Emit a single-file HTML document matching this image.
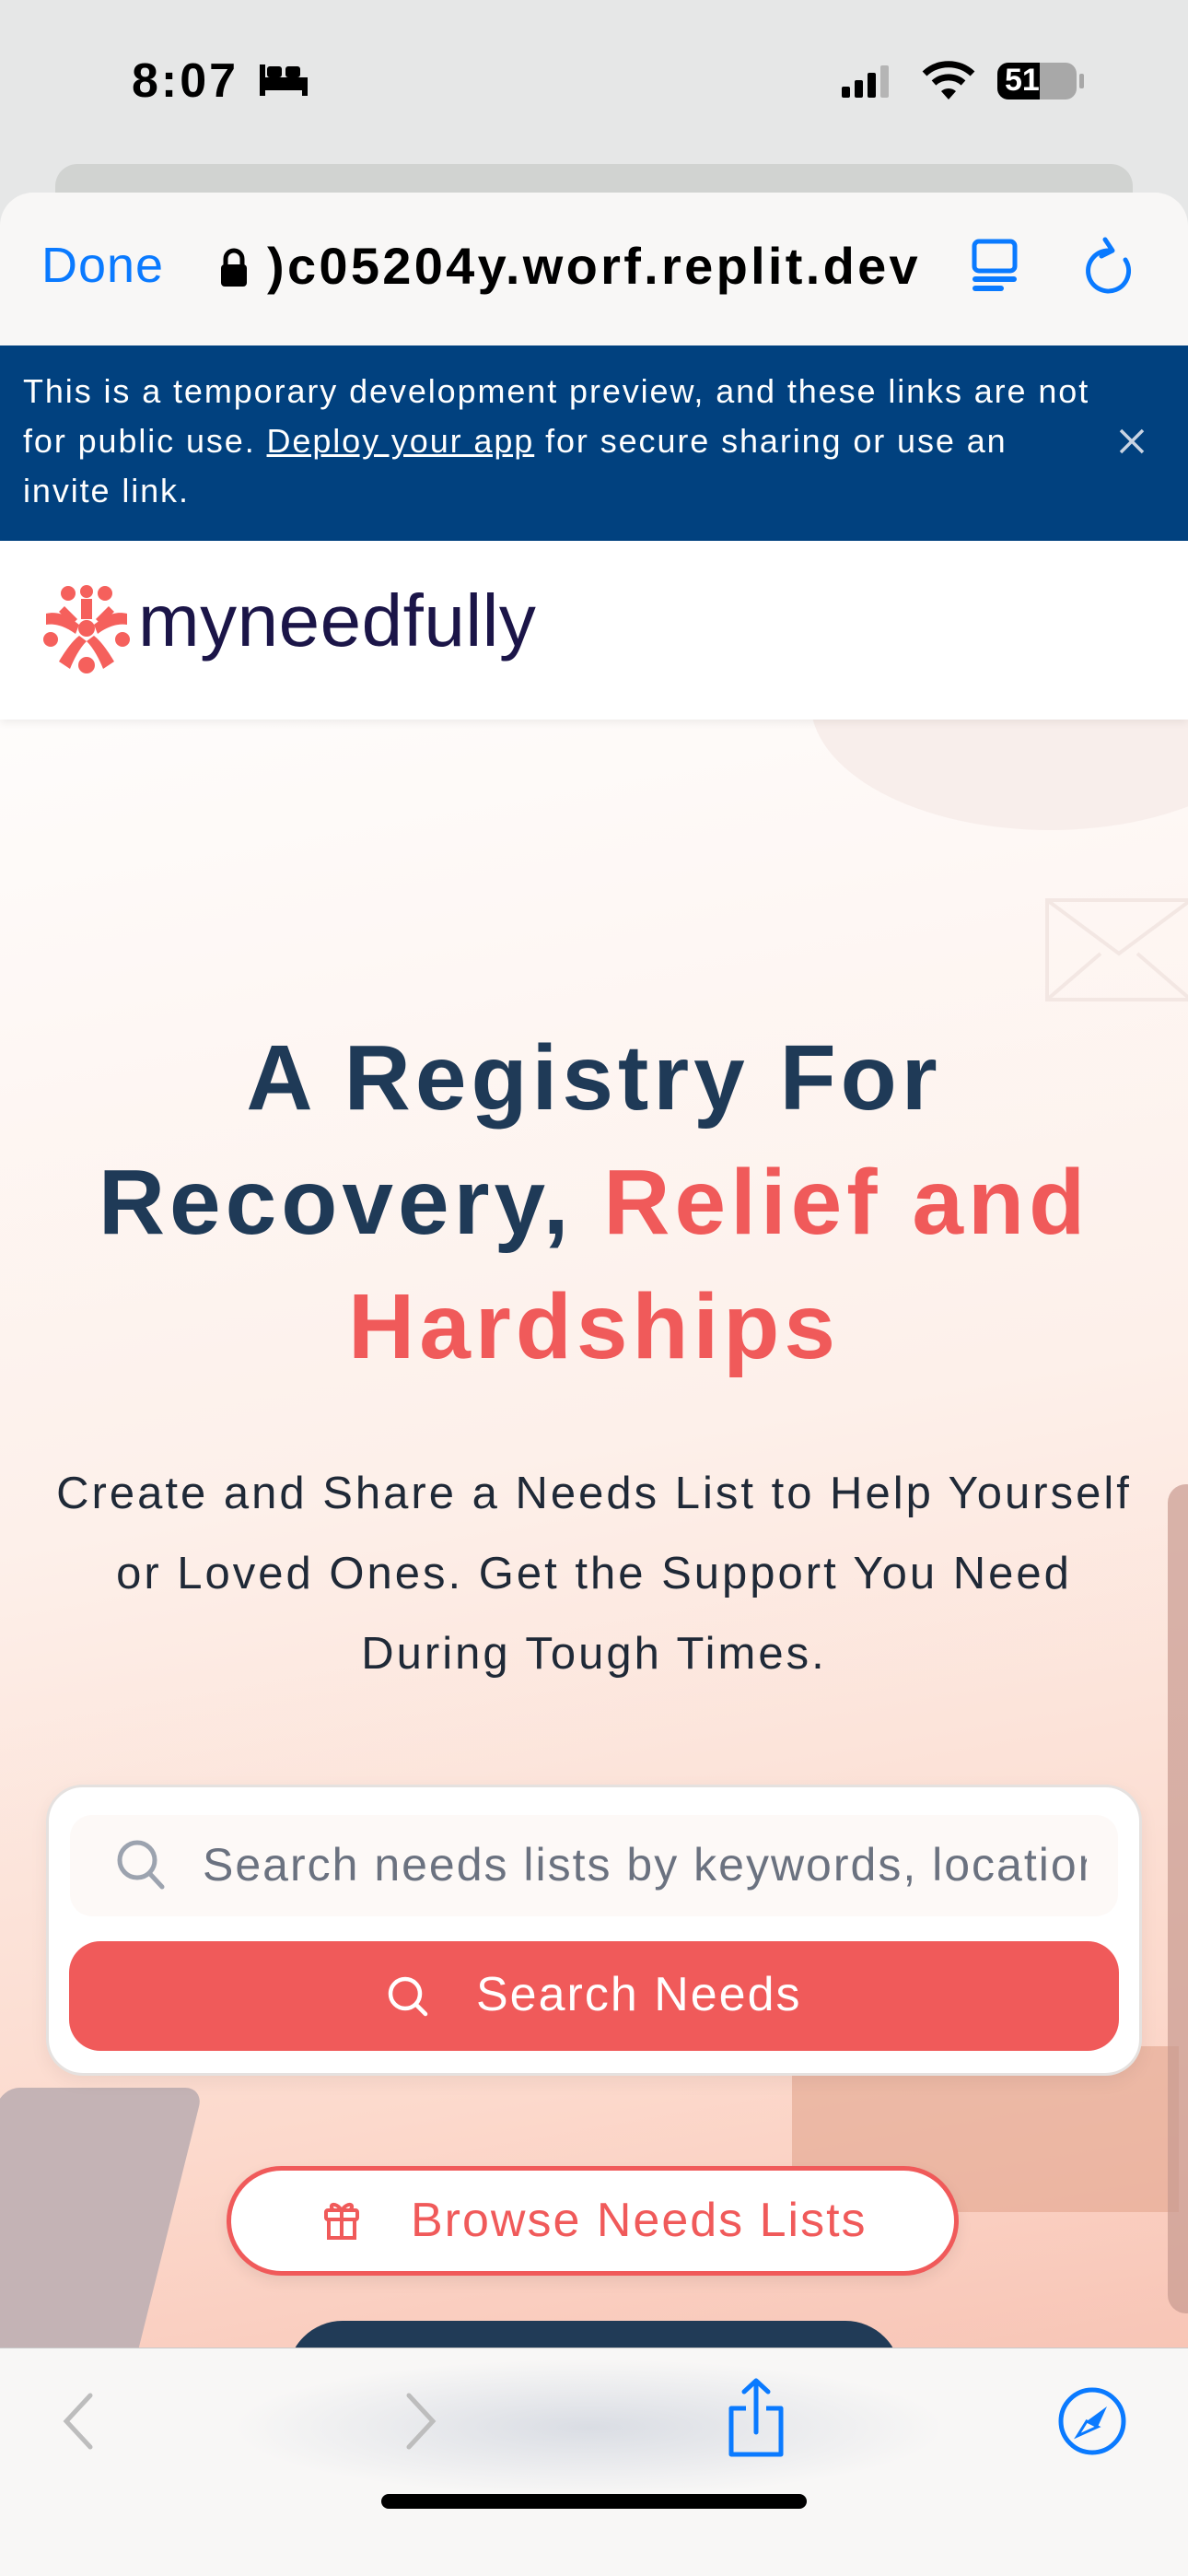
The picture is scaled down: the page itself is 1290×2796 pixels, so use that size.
<!DOCTYPE html>
<html><head><meta charset="utf-8"><style>
*{margin:0;padding:0;box-sizing:border-box}
body{width:1290px;height:2796px;overflow:hidden;position:relative;font-family:"Liberation Sans",sans-serif;background:#e6e7e7}
.abs{position:absolute}
</style></head><body>
<!-- status bar -->
<div class="abs" style="left:143px;top:58px;font-size:52px;font-weight:bold;color:#000;letter-spacing:3px">8:07</div>
<svg class="abs" style="left:280px;top:66px" width="56" height="40"><rect x="2" y="18" width="52" height="14" fill="#000" rx="2"/><rect x="2" y="4" width="6" height="34" fill="#000"/><rect x="48" y="18" width="6" height="20" fill="#000"/><rect x="10" y="6" width="16" height="12" rx="3" fill="#000"/><rect x="30" y="6" width="16" height="12" rx="3" fill="#000"/></svg>
<svg class="abs" style="left:914px;top:70px" width="64" height="36"><rect x="0" y="24" width="9" height="12" rx="2"/><rect x="14" y="17" width="9" height="19" rx="2"/><rect x="28" y="9" width="9" height="27" rx="2"/><rect x="42" y="1" width="9" height="35" rx="2" fill="#b5b5b5"/></svg>
<svg class="abs" style="left:1000px;top:66px" width="60" height="42"><path d="M4 14 A38 38 0 0 1 56 14" stroke="#000" stroke-width="7" fill="none"/><path d="M14 24 A24 24 0 0 1 46 24" stroke="#000" stroke-width="7" fill="none"/><path d="M22 33 L30 42 L38 33 A12 12 0 0 0 22 33Z" fill="#000"/></svg>
<div class="abs" style="left:1083px;top:68px;width:86px;height:40px;border-radius:12px;background:#a8a8a8;overflow:hidden"><div style="width:46px;height:40px;background:#000"></div><div class="abs" style="left:8px;top:0;font-size:34px;font-weight:bold;color:#fff">51</div></div>
<div class="abs" style="left:1172px;top:80px;width:5px;height:16px;background:#a8a8a8;border-radius:2px"></div>
<!-- back tab -->
<div class="abs" style="left:60px;top:178px;width:1170px;height:60px;background:#d1d3d1;border-radius:24px"></div>
<!-- sheet -->
<div class="abs" style="left:0;top:209px;width:1290px;height:170px;background:#f8f7f6;border-radius:36px 36px 0 0"></div>
<div class="abs" style="left:45px;top:257px;font-size:54px;color:#0a7aff;letter-spacing:1px">Done</div>
<svg class="abs" style="left:238px;top:268px" width="32" height="44"><path d="M7 20 V13 A9 9 0 0 1 25 13 V20" stroke="#000" stroke-width="5" fill="none"/><rect x="2" y="19" width="28" height="24" rx="4"/></svg>
<div class="abs" style="left:290px;top:256px;font-size:56px;font-weight:bold;color:#000;letter-spacing:3.3px">)c05204y.worf.replit.dev</div>
<svg class="abs" style="left:1054px;top:258px" width="56" height="60"><rect x="4" y="4" width="44" height="32" rx="5" stroke="#0a7aff" stroke-width="5" fill="none"/><rect x="2" y="42" width="48" height="6" rx="3" fill="#0a7aff"/><rect x="2" y="52" width="34" height="6" rx="3" fill="#0a7aff"/></svg>
<svg class="abs" style="left:1176px;top:256px" width="56" height="66"><path d="M28 16 A22 22 0 1 0 46 26" stroke="#0a7aff" stroke-width="5" fill="none" stroke-linecap="round"/><path d="M24 4 L32 16 L20 22" stroke="#0a7aff" stroke-width="5" fill="none" stroke-linecap="round" stroke-linejoin="round"/></svg>
<!-- banner -->
<div class="abs" style="left:0;top:375px;width:1290px;height:212px;background:#01417f"></div>
<div class="abs" style="left:25px;top:398px;width:1250px;font-size:36px;line-height:54px;color:#fff;letter-spacing:1.9px;white-space:nowrap">This is a temporary development preview, and these links are not<br>for public use. <u>Deploy your app</u> for secure sharing or use an<br>invite link.</div>
<svg class="abs" style="left:1214px;top:464px" width="30" height="30"><path d="M3 3 L27 27 M27 3 L3 27" stroke="#c9d4e3" stroke-width="3.5"/></svg>
<!-- header -->
<div class="abs" style="left:0;top:587px;width:1290px;height:194px;background:#fff;box-shadow:0 4px 8px rgba(0,0,0,.06);z-index:2"></div>
<svg class="abs" style="left:46px;top:632px;z-index:3" width="96" height="100" viewBox="0 0 96 100"><g fill="#f5605c"><circle cx="48" cy="50" r="9"/><circle cx="28" cy="12" r="8"/><circle cx="68" cy="12" r="8"/><circle cx="48" cy="90" r="9"/><circle cx="9" cy="62" r="8"/><circle cx="87" cy="62" r="8"/><circle cx="48" cy="10" r="7"/><path d="M42 18 h12 v22 h-12z"/><path d="M4 34 C20 30 32 40 40 46 L36 56 C28 50 16 44 4 46Z"/><path d="M92 34 C76 30 64 40 56 46 L60 56 C68 50 80 44 92 46Z"/><path d="M18 86 C24 76 32 64 40 58 L48 64 C40 72 34 84 30 94Z"/><path d="M78 86 C72 76 64 64 56 58 L48 64 C56 72 62 84 66 94Z"/><path d="M24 26 L38 40 L32 46 L18 32Z"/><path d="M72 26 L58 40 L64 46 L78 32Z"/></g></svg>
<div class="abs" style="left:150px;top:628px;font-size:80px;color:#1b1548;z-index:3;letter-spacing:0.5px">myneedfully</div>
<!-- hero -->
<div class="abs" style="left:0;top:781px;width:1290px;height:1767px;background:linear-gradient(170deg,#fefcfb 0%,#fdf0ea 45%,#fcd9cc 80%,#f8c5b6 100%);overflow:hidden">
 <div class="abs" style="left:880px;top:-160px;width:520px;height:280px;border-radius:50%;background:#f8eeeb"></div>
 <svg class="abs" style="left:1135px;top:194px" width="160" height="112"><rect x="2" y="2" width="156" height="108" fill="none" stroke="#f3e7e3" stroke-width="4"/><path d="M2 2 L80 60 L158 2 M2 110 L60 60 M158 110 L100 60" stroke="#f3e7e3" stroke-width="4" fill="none"/></svg>
 <div class="abs" style="left:-40px;top:1485px;width:220px;height:330px;background:#c4b3b5;transform:skewX(-14deg);border-radius:20px"></div>
 <div class="abs" style="left:860px;top:1440px;width:420px;height:180px;background:#e3a58e;opacity:.6"></div>
 <div class="abs" style="left:1268px;top:830px;width:40px;height:900px;background:#c89a90;border-radius:20px;opacity:.7"></div>
</div>
<div class="abs" style="left:0;top:1103px;width:1290px;text-align:center;font-size:100px;font-weight:bold;line-height:135px;color:#1f3a57;letter-spacing:5px;white-space:nowrap">A Registry For<br>Recovery, <span style="color:#f05a5a">Relief and<br>Hardships</span></div>
<div class="abs" style="left:0;top:1578px;width:1290px;text-align:center;font-size:49px;line-height:87px;color:#1f2937;letter-spacing:3px;white-space:nowrap">Create and Share a Needs List to Help Yourself<br>or Loved Ones. Get the Support You Need<br>During Tough Times.</div>
<!-- search card -->
<div class="abs" style="left:50px;top:1937px;width:1190px;height:316px;background:#fff;border:3px solid #e5e1df;border-radius:40px;box-shadow:0 6px 20px rgba(0,0,0,.06)"></div>
<div class="abs" style="left:76px;top:1970px;width:1138px;height:110px;background:#fdf9f7;border-radius:24px"></div>
<svg class="abs" style="left:126px;top:1996px" width="54" height="56"><circle cx="23" cy="23" r="19" stroke="#9ca3af" stroke-width="5" fill="none"/><path d="M37 38 L50 52" stroke="#9ca3af" stroke-width="5" stroke-linecap="round"/></svg>
<div class="abs" style="left:220px;top:1995px;width:960px;overflow:hidden;white-space:nowrap;font-size:50px;color:#6b7280;letter-spacing:2px">Search needs lists by keywords, location</div>
<div class="abs" style="left:75px;top:2107px;width:1140px;height:119px;background:#f05a5a;border-radius:34px"></div>
<svg class="abs" style="left:420px;top:2144px" width="48" height="50"><circle cx="20" cy="20" r="16" stroke="#fff" stroke-width="4.5" fill="none"/><path d="M32 32 L42 42" stroke="#fff" stroke-width="4.5" stroke-linecap="round"/></svg>
<div class="abs" style="left:517px;top:2135px;font-size:52px;color:#fff;letter-spacing:2px">Search Needs</div>
<!-- browse -->
<div class="abs" style="left:246px;top:2351px;width:795px;height:119px;background:#fff;border:5px solid #f05a5a;border-radius:60px;box-shadow:0 6px 16px rgba(0,0,0,.08)"></div>
<svg class="abs" style="left:350px;top:2385px" width="42" height="48"><rect x="4" y="14" width="34" height="10" rx="2" stroke="#f05a5a" stroke-width="4" fill="none"/><rect x="7" y="24" width="28" height="20" stroke="#f05a5a" stroke-width="4" fill="none"/><path d="M21 14 V44 M21 14 C14 4 6 8 12 14 M21 14 C28 4 36 8 30 14" stroke="#f05a5a" stroke-width="4" fill="none"/></svg>
<div class="abs" style="left:446px;top:2380px;font-size:52px;color:#f05a5a;letter-spacing:2px">Browse Needs Lists</div>
<div class="abs" style="left:312px;top:2519px;width:666px;height:120px;background:#213b57;border-radius:60px"></div>
<!-- bottom toolbar -->
<div class="abs" style="left:0;top:2548px;width:1290px;height:248px;background:#f8f7f6;border-top:1px solid #c9c9c9"></div>
<div class="abs" style="left:250px;top:2560px;width:780px;height:150px;background:radial-gradient(ellipse at center,rgba(205,210,220,.7),rgba(248,247,246,0) 70%)"></div>
<svg class="abs" style="left:64px;top:2596px" width="40" height="64"><path d="M34 4 L8 32 L34 60" stroke="#bdbdbd" stroke-width="5" fill="none" stroke-linecap="round"/></svg>
<svg class="abs" style="left:438px;top:2596px" width="40" height="64"><path d="M6 4 L32 32 L6 60" stroke="#bdbdbd" stroke-width="5" fill="none" stroke-linecap="round"/></svg>
<svg class="abs" style="left:786px;top:2580px" width="70" height="90"><path d="M35 4 V60 M22 16 L35 4 L48 16" stroke="#0a7aff" stroke-width="5" fill="none" stroke-linecap="round" stroke-linejoin="round"/><path d="M24 34 H8 V84 H62 V34 H46" stroke="#0a7aff" stroke-width="5" fill="none" stroke-linejoin="round"/></svg>
<svg class="abs" style="left:1146px;top:2588px" width="80" height="80"><circle cx="40" cy="40" r="34" stroke="#0a7aff" stroke-width="5" fill="none"/><path d="M56 24 L46 46 L34 40Z" fill="#0a7aff"/><path d="M24 56 L34 40 L46 46Z" stroke="#0a7aff" stroke-width="3" fill="none"/></svg>
<div class="abs" style="left:414px;top:2707px;width:462px;height:16px;background:#000;border-radius:8px"></div>
</body></html>
